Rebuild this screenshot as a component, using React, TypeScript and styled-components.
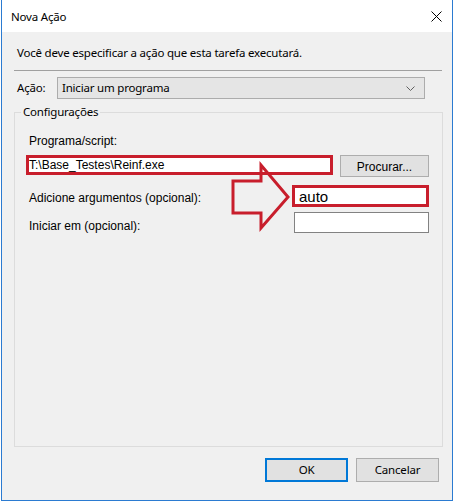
import { FC } from 'react'
import styled, { createGlobalStyle } from 'styled-components'

const GlobalStyle = createGlobalStyle`
   html, body {
      margin: 0;
      padding: 0;
      background: #ffffff;
   }
   * {
      box-sizing: border-box;
   }
`

const uiFont = `'Noto Sans', 'Open Sans', sans-serif`
const formFont = `'Liberation Sans', Arial, sans-serif`
const red = '#c81e2c'

const App: FC = () => {
   return (
      <>
         <GlobalStyle />
         <Window>
            <TitleBar>
               <Title>Nova Ação</Title>
               <Close aria-label="Fechar">
                  <svg width="11" height="11" viewBox="0 0 11 11">
                     <path d="M0.5 0.5 L10.5 10.5 M10.5 0.5 L0.5 10.5" stroke="#000" strokeWidth="1" />
                  </svg>
               </Close>
            </TitleBar>
            <Body>
               <Intro>Você deve especificar a ação que esta tarefa executará.</Intro>
               <Separator />
               <ActionRow>
                  <ActionLabel>Ação:</ActionLabel>
                  <Select>
                     <span>Iniciar um programa</span>
                     <svg width="9" height="5" viewBox="0 0 9 5">
                        <path d="M0.5 0.5 L4.5 4.5 L8.5 0.5" fill="none" stroke="#606060" strokeWidth="1" />
                     </svg>
                  </Select>
               </ActionRow>
               <Group>
                  <Legend>Configurações</Legend>
                  <FieldLabel $top={0}>Programa/script:</FieldLabel>
                  <ProgramRow>
                     <TextBox $highlight $width={307} $height={20}>
                        T:\Base_Testes\Reinf.exe
                     </TextBox>
                     <BrowseButton>Procurar...</BrowseButton>
                  </ProgramRow>
                  <ArgRow $gap={8}>
                     <FieldLabel $top={6}>Adicione argumentos (opcional):</FieldLabel>
                     <TextBox $highlight $width={137} $height={22} $big>
                        auto
                     </TextBox>
                  </ArgRow>
                  <ArgRow $gap={5}>
                     <FieldLabel $top={7}>Iniciar em (opcional):</FieldLabel>
                     <TextBox $width={135} $height={21} />
                  </ArgRow>
                  <Arrow width="62" height="70" viewBox="0 0 62 70">
                     <path
                        d="M3 19 L31 19 L31 3 L58 35 L31 66 L31 51 L3 51 Z"
                        fill="none"
                        stroke={red}
                        strokeWidth="3"
                        strokeLinejoin="miter"
                     />
                  </Arrow>
               </Group>
               <Footer>
                  <DialogButton $primary>OK</DialogButton>
                  <DialogButton>Cancelar</DialogButton>
               </Footer>
            </Body>
         </Window>
      </>
   )
}

const Window = styled.div`
   margin-left: 1px;
   width: 452px;
   height: 501px;
   display: flex;
   flex-direction: column;
   border: 1px solid #2b7bd1;
   border-top: none;
   background: #f0f0f0;
   font-family: ${uiFont};
   font-size: 11.5px;
   letter-spacing: -0.2px;
   color: #000;
`

const TitleBar = styled.div`
   height: 32px;
   flex: none;
   display: flex;
   align-items: center;
   justify-content: space-between;
   padding: 0 6px 0 9px;
   background: #ffffff;
`

const Title = styled.span`
   line-height: 16px;
   padding-top: 1px;
`

const Close = styled.div`
   width: 20px;
   height: 20px;
   display: flex;
   align-items: center;
   justify-content: center;
`

const Body = styled.div`
   flex: 1;
   display: flex;
   flex-direction: column;
   padding: 0 10px 0 12px;
`

const Intro = styled.div`
   margin-top: 13px;
   padding-left: 3px;
   line-height: 16px;
`

const Separator = styled.div`
   margin-top: 9px;
   height: 1px;
   background: #a0a0a0;
`

const ActionRow = styled.div`
   margin-top: 6px;
   display: flex;
   align-items: center;
   height: 22px;
   padding-left: 3px;
   gap: 8px;
`

const ActionLabel = styled.span`
   width: 32px;
   line-height: 16px;
`

const Select = styled.div`
   width: 368px;
   height: 22px;
   display: flex;
   align-items: center;
   justify-content: space-between;
   padding: 0 9px 0 4px;
   background: #e5e5e5;
   border: 1px solid #acacac;
   line-height: 16px;
`

const Group = styled.div`
   position: relative;
   margin-top: 13px;
   width: 429px;
   height: 335px;
   border: 1px solid #dcdcdc;
   padding: 21px 13px 0 11px;
   display: flex;
   flex-direction: column;
`

const Legend = styled.span`
   position: absolute;
   top: -9px;
   left: 6px;
   padding: 0 2px;
   background: #f0f0f0;
   line-height: 16px;
`

const FieldLabel = styled.span<{ $top: number }>`
   font-family: ${formFont};
   font-size: 12px;
   letter-spacing: 0;
   line-height: 15px;
   padding-left: 3px;
   padding-top: ${p => p.$top}px;
`

const ProgramRow = styled.div`
   margin-top: 6px;
   display: flex;
   align-items: flex-start;
   gap: 7px;
`

const ArgRow = styled.div<{ $gap: number }>`
   margin-top: ${p => p.$gap}px;
   display: flex;
   align-items: flex-start;
   justify-content: space-between;
`

const TextBox = styled.div<{ $highlight?: boolean; $width: number; $height: number; $big?: boolean }>`
   width: ${p => p.$width}px;
   height: ${p => p.$height}px;
   background: #ffffff;
   border: ${p => (p.$highlight ? `3px solid ${red}` : '1px solid #828282')};
   display: flex;
   align-items: center;
   padding-left: ${p => (p.$big ? 4 : 0)}px;
   font-family: ${formFont};
   font-size: ${p => (p.$big ? 15 : 12)}px;
   letter-spacing: 0;
   white-space: nowrap;
   overflow: hidden;
`

const BrowseButton = styled.div`
   width: 89px;
   height: 22px;
   display: flex;
   align-items: center;
   justify-content: center;
   background: #e1e1e1;
   border: 1px solid #adadad;
   font-family: ${formFont};
   font-size: 12px;
   letter-spacing: 0;
   padding-top: 1px;
`

const Arrow = styled.svg`
   position: absolute;
   left: 215px;
   top: 49px;
   overflow: visible;
`

const Footer = styled.div`
   margin-top: 11px;
   display: flex;
   justify-content: flex-end;
   gap: 8px;
   padding-right: 3px;
`

const DialogButton = styled.div<{ $primary?: boolean }>`
   width: 83px;
   height: 24px;
   display: flex;
   align-items: center;
   justify-content: center;
   background: #e1e1e1;
   border: ${p => (p.$primary ? '2px solid #0078d7' : '1px solid #adadad')};
   line-height: 16px;
`

export default App
